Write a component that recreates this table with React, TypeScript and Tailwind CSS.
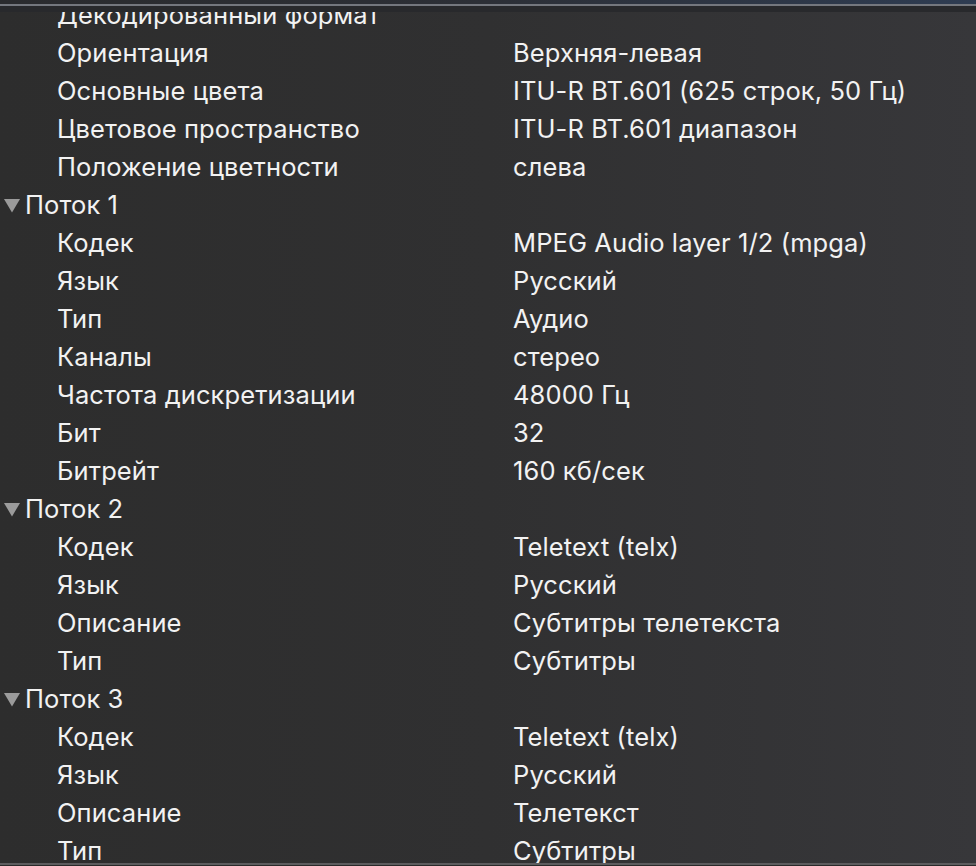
import React from "react";

type Row = { kind: "item"; label: string; value?: string } | { kind: "group"; label: string };

const rows: Row[] = [
  { kind: "item", label: "Декодированный формат" },
  { kind: "item", label: "Ориентация", value: "Верхняя-левая" },
  { kind: "item", label: "Основные цвета", value: "ITU-R BT.601 (625 строк, 50 Гц)" },
  { kind: "item", label: "Цветовое пространство", value: "ITU-R BT.601 диапазон" },
  { kind: "item", label: "Положение цветности", value: "слева" },
  { kind: "group", label: "Поток 1" },
  { kind: "item", label: "Кодек", value: "MPEG Audio layer 1/2 (mpga)" },
  { kind: "item", label: "Язык", value: "Русский" },
  { kind: "item", label: "Тип", value: "Аудио" },
  { kind: "item", label: "Каналы", value: "стерео" },
  { kind: "item", label: "Частота дискретизации", value: "48000 Гц" },
  { kind: "item", label: "Бит", value: "32" },
  { kind: "item", label: "Битрейт", value: "160 кб/сек" },
  { kind: "group", label: "Поток 2" },
  { kind: "item", label: "Кодек", value: "Teletext (telx)" },
  { kind: "item", label: "Язык", value: "Русский" },
  { kind: "item", label: "Описание", value: "Субтитры телетекста" },
  { kind: "item", label: "Тип", value: "Субтитры" },
  { kind: "group", label: "Поток 3" },
  { kind: "item", label: "Кодек", value: "Teletext (telx)" },
  { kind: "item", label: "Язык", value: "Русский" },
  { kind: "item", label: "Описание", value: "Телетекст" },
  { kind: "item", label: "Тип", value: "Субтитры" },
];

function Triangle() {
  return (
    <svg width="18" height="15" viewBox="0 0 18 15" className="shrink-0">
      <polygon points="1,1 17,1 9,14.5" fill="#9b9b9b" />
    </svg>
  );
}

export default function App() {
  return (
    <div
      className="relative h-[866px] w-[976px] overflow-hidden bg-gradient-to-r from-[#2d2d2d] via-[#303031] to-[#37373a] text-[#f2f2f2]"
      style={{ fontFamily: "Inter, 'Noto Sans', sans-serif" }}
    >
      <div className="mt-[-4px] flex flex-col">
        {rows.map((r, i) =>
          r.kind === "group" ? (
            <div key={i} className="flex h-[38px] items-center text-[25.5px] leading-none tracking-[0.1px]">
              <div className="ml-[3px] mr-[4px] flex items-center">
                <Triangle />
              </div>
              <span>{r.label}</span>
            </div>
          ) : (
            <div key={i} className="flex h-[38px] items-center text-[25.5px] leading-none tracking-[0.1px]">
              <span className="w-[513px] shrink-0 pl-[57px]">{r.label}</span>
              <span>{r.value}</span>
            </div>
          )
        )}
      </div>
      <div className="absolute left-0 right-0 top-0 flex flex-col">
        <div className="h-[4px] bg-gradient-to-r from-[#2a2b2e] via-[#2c2f36] to-[#2e3c52]" />
        <div className="h-[2px] bg-[#74777e]" />
        <div className="h-[6px] bg-[#28292c]" />
      </div>
      <div className="absolute bottom-0 left-0 right-0 flex flex-col">
        <div className="h-[2px] bg-[#5c5c5e]" />
        <div className="h-[1px] bg-[#2a2a2a]" />
      </div>
    </div>
  );
}
